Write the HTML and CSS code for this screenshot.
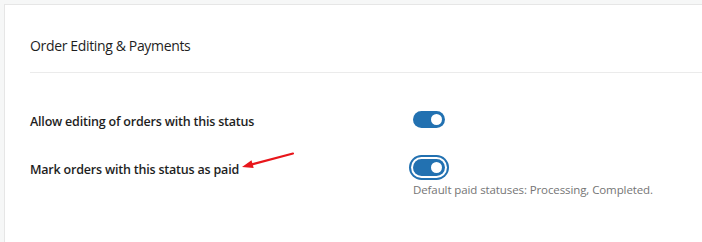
FILE: index.html
```html
<!DOCTYPE html>
<html>
<head>
<meta charset="utf-8">
<link rel="stylesheet" href="styles.css">
</head>
<body>
<div class="page">
  <div class="panel">
    <div class="header"><h2 class="title">Order Editing &amp; Payments</h2></div>
    <div class="rows">
      <div class="label">Allow editing of orders with this status</div>
      <div class="control"><span class="toggle on"><span class="thumb"></span></span></div>
      <div class="label label-arrow"><span>Mark orders with this status as paid</span><span class="anchor"><svg class="arrow" width="56" height="20" viewBox="0 0 56 20"><line x1="53" y1="1.5" x2="11" y2="12.6" stroke="#e8161b" stroke-width="2.2" stroke-linecap="round"/><polygon points="2,15 11.5,8.2 13.7,16" fill="#e8161b"/></svg></span></div>
      <div class="control">
        <span class="toggle on focus"><span class="thumb"></span></span>
        <p class="help">Default paid statuses: Processing, Completed.</p>
      </div>
    </div>
  </div>
</div>
</body>
</html>
```
FILE: styles.css
```css
html, body { margin: 0; padding: 0; }
body { font-family: "Open Sans", "Noto Sans", sans-serif; color: #1e1e1e; }
.page { background: #f6f7f7; height: 242px; padding: 4px 0 0 4px; box-sizing: border-box; }
.panel { background: #fff; border-top: 1px solid #e6e6e6; border-left: 1px solid #e6e6e6; height: 100%; box-sizing: border-box; padding-left: 25px; }
.header { padding: 31px 0 16px; border-bottom: 1px solid #ebebeb; }
.title { margin: 0; font-size: 14px; line-height: 20px; font-weight: 500; letter-spacing: -0.35px; color: #1e1e1e; }
.rows { display: grid; grid-template-columns: 383px 1fr; row-gap: 28px; padding-top: 39px; }
.label { font-size: 12.5px; line-height: 20px; font-weight: 600; letter-spacing: -0.2px; color: #1e1e1e; }
.label-arrow { display: flex; align-items: flex-start; }
.anchor { position: relative; width: 0; height: 20px; }
.arrow { position: absolute; left: 1px; top: -8px; }
.control { display: flex; flex-direction: column; align-items: flex-start; }
.toggle { display: block; width: 32px; height: 17px; border-radius: 9px; background: #2271b1; position: relative; margin-top: -1px; }
.toggle .thumb { position: absolute; width: 11px; height: 11px; border-radius: 50%; background: #fff; top: 3px; right: 3px; }
.toggle.focus { box-shadow: 0 0 0 2px #fff, 0 0 0 4px #2271b1; }
.help { margin: 5px 0 0; font-size: 11.5px; line-height: 18px; color: #757575; letter-spacing: -0.1px; }
```
